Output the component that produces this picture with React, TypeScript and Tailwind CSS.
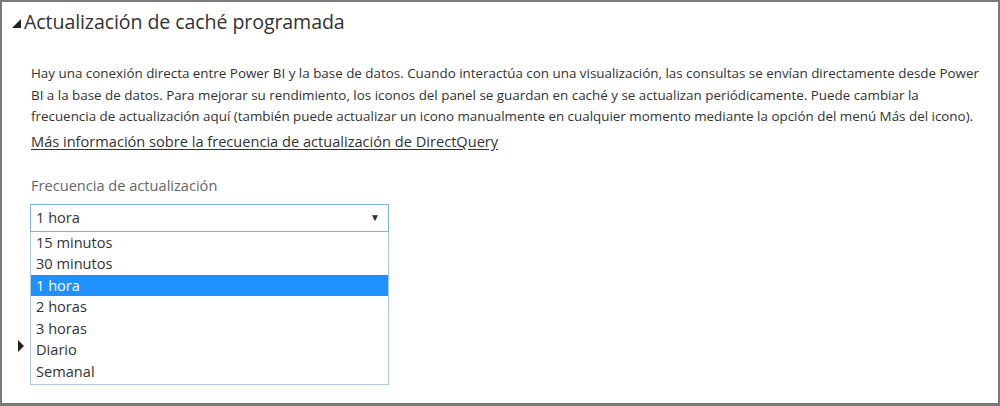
import React from "react";

const options = ["15 minutos", "30 minutos", "1 hora", "2 horas", "3 horas", "Diario", "Semanal"];

const App = () => {
  const selected = "1 hora";

  return (
    <div
      className="w-[1000px] h-[406px] border-2 border-b-[3px] border-[#7a7a7a] bg-white text-[#333] overflow-hidden"
      style={{ fontFamily: '"Open Sans", "Noto Sans", sans-serif' }}
    >
      {/* Section header */}
      <div className="flex items-center h-[40px] pl-[10px]">
        <svg width="9" height="9" viewBox="0 0 9 9" className="mr-[3px] mt-[2px]">
          <polygon points="9,0 9,9 0,9" fill="#222" />
        </svg>
        <h2 className="text-[19.6px] tracking-[-0.1px] text-[#333]">Actualización de caché programada</h2>
      </div>

      <div className="pl-[29px] pr-[16px] pt-[21px]">
        <p className="text-[13.4px] leading-[21.5px] text-[#333]">
          Hay una conexión directa entre Power BI y la base de datos. Cuando interactúa con una visualización, las consultas se envían directamente desde Power BI a la base de datos. Para mejorar su rendimiento, los iconos del panel se guardan en caché y se actualizan periódicamente. Puede cambiar la frecuencia de actualización aquí (también puede actualizar un icono manualmente en cualquier momento mediante la opción del menú Más del icono).
        </p>
        <a href="#" className="inline-block mt-[3px] text-[14.6px] leading-[21px] text-[#333] underline underline-offset-2">
          Más información sobre la frecuencia de actualización de DirectQuery
        </a>

        <div className="mt-[22px] text-[14.6px] leading-[20px] text-[#666]">Frecuencia de actualización</div>

        <div className="flex">
          <div className="w-[28px] -ml-[29px] flex items-start pt-[145px] pl-[16px]">
            <svg width="6" height="12" viewBox="0 0 6 12">
              <polygon points="0,0 6,6 0,12" fill="#222" />
            </svg>
          </div>
          <div className="mt-[9px] w-[359px]">
            <div className="flex items-center justify-between h-[28px] border border-[#7fb0e8] pl-[5px] pr-[8px] text-[14.6px]">
              <span>{selected}</span>
              <span className="text-[10px] text-[#333]">▼</span>
            </div>
            <ul className="border border-t-0 border-[#a9c9f0] pb-[2px]">
              {options.map((o) => (
                <li
                  key={o}
                  className={
                    "h-[21.5px] leading-[21.5px] pl-[5px] text-[14.6px] " +
                    (o === selected ? "bg-[#1e90ff] text-white" : "text-[#333]")
                  }
                >
                  {o}
                </li>
              ))}
            </ul>
          </div>
        </div>
      </div>
    </div>
  );
};

export default App;
